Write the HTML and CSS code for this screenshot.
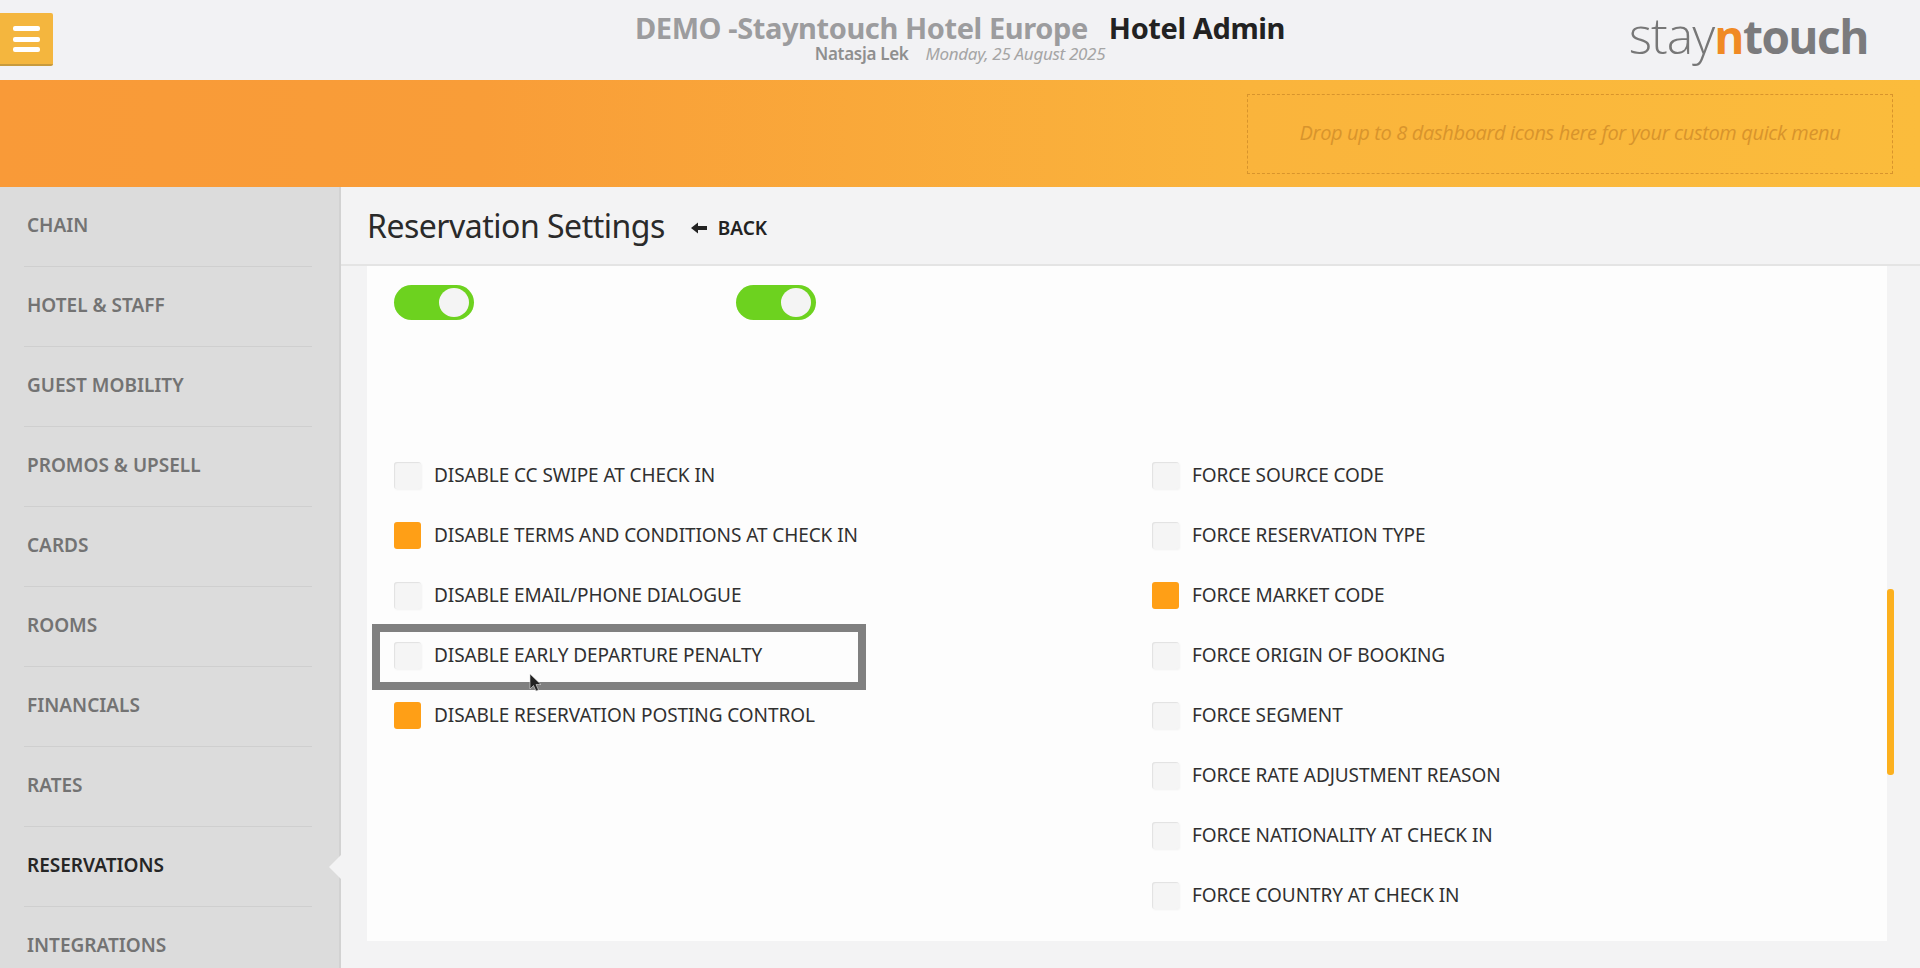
FILE: index.html
```html
<!DOCTYPE html>
<html lang="en">
<head>
<meta charset="utf-8">
<title>Reservation Settings</title>
<link rel="stylesheet" href="styles.css">
</head>
<body>
<header class="topbar">
  <button class="menu-btn" aria-label="Menu"><span></span><span></span><span></span></button>
  <div class="titles">
    <div class="title-line"><span class="hotel">DEMO -Stayntouch Hotel Europe</span><span class="app">Hotel Admin</span></div>
    <div class="sub-line"><span class="user">Natasja Lek</span><span class="date">Monday, 25 August 2025</span></div>
  </div>
  <div class="logo"><span class="l-stay">stay</span><span class="l-n">n</span><span class="l-touch">touch</span></div>
</header>
<div class="band">
  <div class="dropzone">Drop up to 8 dashboard icons here for your custom quick menu</div>
</div>
<div class="body-row">
  <nav class="sidebar">
    <a class="nav-item">CHAIN</a>
    <a class="nav-item">HOTEL &amp; STAFF</a>
    <a class="nav-item">GUEST MOBILITY</a>
    <a class="nav-item">PROMOS &amp; UPSELL</a>
    <a class="nav-item">CARDS</a>
    <a class="nav-item">ROOMS</a>
    <a class="nav-item">FINANCIALS</a>
    <a class="nav-item">RATES</a>
    <a class="nav-item active">RESERVATIONS</a>
    <a class="nav-item">INTEGRATIONS</a>
  </nav>
  <main class="main">
    <div class="page-head">
      <h1>Reservation Settings</h1>
      <a class="back"><svg class="back-arrow" width="16" height="12" viewBox="0 0 16 12"><path d="M0 6 L7 0.5 V4 H16 V8 H7 V11.5 Z" fill="#222"/></svg>BACK</a>
    </div>
    <section class="card">
      <div class="toggles">
        <div class="toggle-cell"><span class="toggle"><span class="knob"></span></span></div>
        <div class="toggle-cell"><span class="toggle"><span class="knob"></span></span></div>
      </div>
      <div class="columns">
        <div class="col col-left">
          <label class="row"><span class="check"></span>DISABLE CC SWIPE AT CHECK IN</label>
          <label class="row"><span class="check on"></span>DISABLE TERMS AND CONDITIONS AT CHECK IN</label>
          <label class="row"><span class="check"></span>DISABLE EMAIL/PHONE DIALOGUE</label>
          <label class="row highlighted"><span class="check"></span>DISABLE EARLY DEPARTURE PENALTY
            <svg class="cursor" width="14" height="22" viewBox="0 0 14 22"><path d="M1 1 V16 L4.5 12.5 L7 18 L9.5 17 L7 11.5 H12 Z" fill="#222" stroke="#ddd" stroke-width="0.6"/></svg>
          </label>
          <label class="row"><span class="check on"></span>DISABLE RESERVATION POSTING CONTROL</label>
        </div>
        <div class="col col-right">
          <label class="row"><span class="check"></span>FORCE SOURCE CODE</label>
          <label class="row"><span class="check"></span>FORCE RESERVATION TYPE</label>
          <label class="row"><span class="check on"></span>FORCE MARKET CODE</label>
          <label class="row"><span class="check"></span>FORCE ORIGIN OF BOOKING</label>
          <label class="row"><span class="check"></span>FORCE SEGMENT</label>
          <label class="row"><span class="check"></span>FORCE RATE ADJUSTMENT REASON</label>
          <label class="row"><span class="check"></span>FORCE NATIONALITY AT CHECK IN</label>
          <label class="row"><span class="check"></span>FORCE COUNTRY AT CHECK IN</label>
        </div>
      </div>
      <div class="scroll-thumb"></div>
    </section>
  </main>
</div>
</body>
</html>
```
FILE: styles.css
```css
* { box-sizing: border-box; }
html, body { margin: 0; height: 968px; overflow: hidden; }
body {
  font-family: "Noto Sans", "Open Sans", sans-serif;
  background: #f3f3f4;
  color: #2a2a2a;
  display: flex;
  flex-direction: column;
}
.topbar {
  height: 80px;
  flex: none;
  background: #f2f2f4;
  display: grid;
  grid-template-columns: 1fr auto 1fr;
  align-items: start;
  position: relative;
}
.menu-btn {
  width: 53px;
  height: 53px;
  margin-top: 13px;
  padding: 13px 13px 0;
  border: 0;
  border-bottom: 2px solid #c79a3c;
  border-radius: 0 2px 2px 0;
  background: #f4b63e;
  display: flex;
  flex-direction: column;
  gap: 5.5px;
}
.menu-btn span { display: block; width: 27px; height: 5px; border-radius: 2px; background: #fff; }
.titles { text-align: center; padding-top: 8px; }
.title-line { font-size: 29px; font-weight: 700; line-height: 39px; letter-spacing: -0.4px; white-space: nowrap; }
.hotel { color: #9c9c9e; margin-right: 21px; }
.app { color: #222; }
.sub-line { font-size: 17px; line-height: 18px; margin-top: -2px; letter-spacing: -0.3px; white-space: nowrap; }
.user { color: #8f8f8f; font-weight: 600; margin-right: 17px; }
.date { color: #a5a5a5; font-style: italic; }
.logo { justify-self: end; padding: 3px 52px 0 0; font-family: "Open Sans", sans-serif; font-size: 46px; line-height: 65px; white-space: nowrap; }
.l-stay { font-weight: 300; font-size: 50px; letter-spacing: -1px; color: #777; }
.l-n { font-weight: 700; color: #f08a24; letter-spacing: -1.5px; }
.l-touch { font-weight: 700; color: #7b7b7d; letter-spacing: -1.5px; }
.band {
  height: 107px;
  flex: none;
  background: linear-gradient(90deg, #f99a38 0%, #f99d38 25%, #fab43c 65%, #fbbc3c 100%);
  display: flex;
  justify-content: flex-end;
  align-items: center;
  padding-right: 27px;
}
.dropzone {
  width: 646px;
  height: 80px;
  padding-bottom: 2px;
  border: 1px dashed #d8942c;
  color: #d8942c;
  font-family: "Open Sans", sans-serif;
  font-style: italic;
  font-size: 20px;
  letter-spacing: -0.35px;
  display: flex;
  align-items: center;
  justify-content: center;
  white-space: nowrap;
}
.body-row { flex: 1; min-height: 0; display: flex; }
.sidebar {
  width: 341px;
  flex: none;
  background: #dcdcdc;
  box-shadow: inset -2px 0 #d2d2d2;
  padding: 0 29px 0 24px;
  overflow: hidden;
}
.nav-item {
  display: flex;
  align-items: center;
  height: 80px;
  flex: none;
  padding: 0 0 4px 3px;
  border-bottom: 1px solid #cfcfcf;
  color: #737373;
  font-size: 19px;
  font-weight: 600;
  letter-spacing: 0;
  position: relative;
}
.nav-item.active { color: #262626; }
.nav-item.active::after {
  content: "";
  position: absolute;
  right: -29px;
  top: 28px;
  border: 12px solid transparent;
  border-left: 0;
  border-right-color: #f3f3f4;
}
.main { flex: 1; min-width: 0; display: flex; flex-direction: column; padding: 0 33px 27px 26px; }
.page-head {
  height: 79px;
  flex: none;
  margin: 0 -33px 0 -26px;
  padding: 0 0 1px 26px;
  border-bottom: 2px solid #e4e4e4;
  display: flex;
  align-items: center;
}
h1 { margin: 0 26px 0 0; font-size: 32px; font-weight: 400; letter-spacing: -0.5px; color: #2a2a2a; }
.back { display: flex; align-items: center; gap: 11px; font-size: 19px; font-weight: 600; color: #222; letter-spacing: 0; padding-top: 5px; }
.card {
  flex: 1;
  background: #fdfdfd;
  position: relative;
  padding: 19px 0 0 27px;
}
.toggles { display: flex; height: 160px; }
.toggle-cell { width: 342px; }
.toggle { display: block; position: relative; width: 80px; height: 35px; border-radius: 18px; background: #6dd21f; }
.knob { position: absolute; right: 5px; top: 3px; width: 30px; height: 29px; border-radius: 50%; background: #f4f4f4; }
.columns { display: flex; }
.col-left { width: 758px; }
.row {
  display: flex;
  align-items: center;
  height: 60px;
  gap: 13px;
  font-size: 19px;
  letter-spacing: -0.08px;
  color: #303030;
  position: relative;
  white-space: nowrap;
}
.check {
  width: 27px;
  height: 27px;
  flex: none;
  border-radius: 3px;
  background: #f5f5f5;
  box-shadow: inset 1px 1px 1px #e2e2e2, 1px 1px 2px #f2f2f2;
}
.check.on { background: #ff9f16; box-shadow: none; }
.highlighted::before {
  content: "";
  position: absolute;
  left: -22px;
  right: 0;
  top: -1px;
  bottom: -5px;
  border: 8px solid #808080;
}
.cursor { position: absolute; left: 135px; top: 48px; }
.col-left .row { width: 472px; }
.scroll-thumb {
  position: absolute;
  right: -7px;
  top: 323px;
  width: 7px;
  height: 186px;
  border-radius: 3px;
  background: #fcb01e;
}
```
